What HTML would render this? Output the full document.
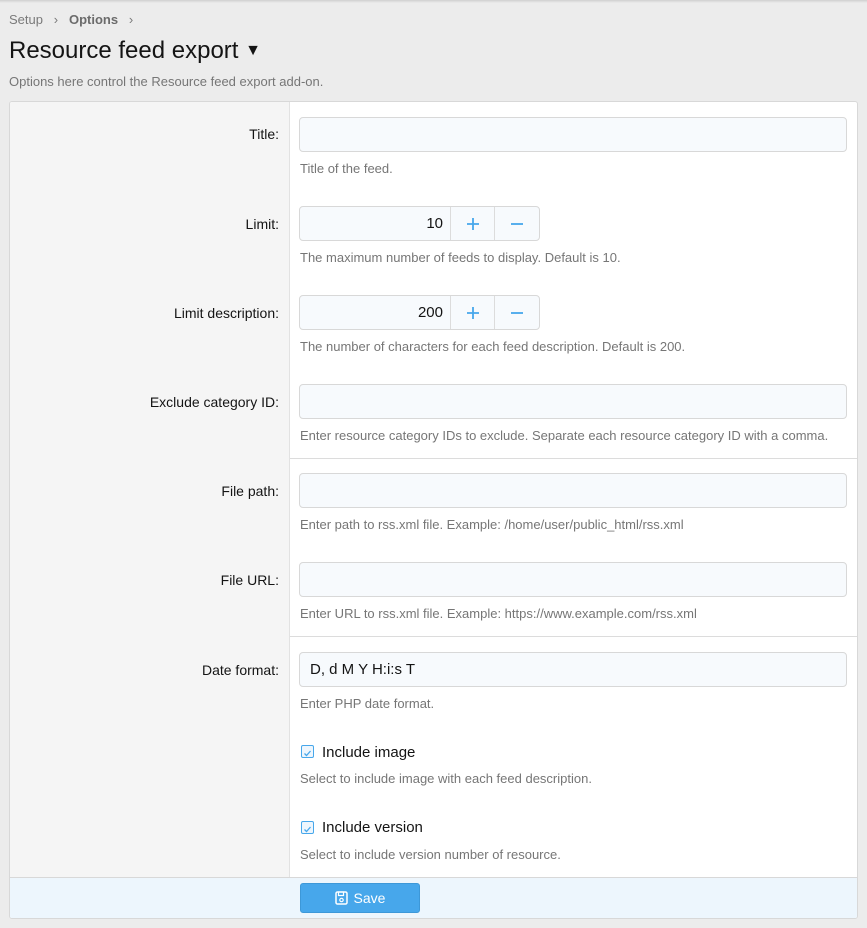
<!DOCTYPE html>
<html><head><meta charset="utf-8"><style>
*{box-sizing:border-box;margin:0;padding:0}
body{width:867px;height:928px;background:#ececec;font-family:"Liberation Sans",Arial,sans-serif;position:relative;overflow:hidden;color:#141414}
.topbar{position:absolute;left:0;top:0;width:867px;height:3px;background:linear-gradient(#cfcfcf,#ececec)}
.a{position:absolute}
.crumb{left:9px;top:12px;font-size:13px;color:#7a7a7a}
.crumb b{color:#6b6b6b}
h1{position:absolute;left:9px;top:37px;font-size:24px;font-weight:normal;color:#141414}
.desc{left:9px;top:74px;font-size:13px;color:#767676}
.panel{left:9px;top:101px;width:849px;height:818px;background:#fff;border:1px solid #d8d8d8;border-radius:3px;overflow:hidden}
.left{left:0;top:0;width:280px;height:776px;background:#f5f5f5;border-right:1px solid #e2e2e2}
.lbl{position:absolute;right:578px;font-size:14px;color:#141414;text-align:right;white-space:nowrap}
.in{position:absolute;left:289px;width:548px;height:35px;background:#f7fafd;border:1px solid #d8d8d8;border-radius:4px;font-size:15px;padding:8px 10px}
.help{position:absolute;left:290px;font-size:13px;color:#767676}
.sep{position:absolute;left:280px;width:569px;height:1px;background:#dcdcdc}
.num{position:absolute;left:289px;width:241px;height:35px;border:1px solid #d8d8d8;border-radius:4px;background:#f7fafd;display:flex}
.num .v{width:151px;text-align:right;padding:8px 7px;font-size:15px;border-right:1px solid #dcdcdc}
.num .b{width:44px;display:flex;align-items:center;justify-content:center;border-right:1px solid #dcdcdc}
.num .b:last-child{border-right:0}
.cb{position:absolute;left:291px;width:13px;height:13px;border:1px solid #47a7eb;border-radius:2px;background:#eef6fd}
.cbl{position:absolute;left:312px;font-size:15px}
.foot{position:absolute;left:0;top:775px;width:849px;height:43px;background:#edf6fd;border-top:1px solid #d8d8d8}
.btn{position:absolute;left:290px;top:5px;width:120px;height:30px;background:#47a7eb;border:1px solid #3d98d8;border-radius:3px;color:#fff;font-size:14px;text-align:center;line-height:28px}
</style></head><body>
<div class="topbar"></div>
<div class="a crumb">Setup &nbsp;&nbsp;›&nbsp;&nbsp; <b>Options</b> &nbsp;&nbsp;›</div>
<h1>Resource feed export <span style="font-size:16px;position:relative;top:-3px">▼</span></h1>
<div class="a desc">Options here control the Resource feed export add-on.</div>
<div class="a panel">
<div class="a left"></div>
<div class="lbl" style="top:24px">Title:</div>
<div class="in" style="top:15px"></div>
<div class="help" style="top:59px">Title of the feed.</div>
<div class="lbl" style="top:114px">Limit:</div>
<div class="num" style="top:104px"><div class="v">10</div><div class="b"><svg width="12" height="12"><path d="M6 0v12M0 6h12" stroke="#47a7eb" stroke-width="1.8"/></svg></div><div class="b"><svg width="12" height="12"><path d="M0 6h12" stroke="#47a7eb" stroke-width="1.8"/></svg></div></div>
<div class="help" style="top:148px">The maximum number of feeds to display. Default is 10.</div>
<div class="lbl" style="top:203px">Limit description:</div>
<div class="num" style="top:193px"><div class="v">200</div><div class="b"><svg width="12" height="12"><path d="M6 0v12M0 6h12" stroke="#47a7eb" stroke-width="1.8"/></svg></div><div class="b"><svg width="12" height="12"><path d="M0 6h12" stroke="#47a7eb" stroke-width="1.8"/></svg></div></div>
<div class="help" style="top:237px">The number of characters for each feed description. Default is 200.</div>
<div class="lbl" style="top:292px">Exclude category ID:</div>
<div class="in" style="top:282px"></div>
<div class="help" style="top:326px">Enter resource category IDs to exclude. Separate each resource category ID with a comma.</div>
<div class="sep" style="top:356px"></div>
<div class="lbl" style="top:381px">File path:</div>
<div class="in" style="top:371px"></div>
<div class="help" style="top:415px">Enter path to rss.xml file. Example: /home/user/public_html/rss.xml</div>
<div class="lbl" style="top:470px">File URL:</div>
<div class="in" style="top:460px"></div>
<div class="help" style="top:504px">Enter URL to rss.xml file. Example: https://www.example.com/rss.xml</div>
<div class="sep" style="top:534px"></div>
<div class="lbl" style="top:560px">Date format:</div>
<div class="in" style="top:550px">D, d M Y H:i:s T</div>
<div class="help" style="top:594px">Enter PHP date format.</div>
<div class="cb" style="top:643px"><svg width="11" height="11" viewBox="0 0 11 11"><path d="M2.5 5.5l2 2 4-4.5" stroke="#47a7eb" stroke-width="1.3" fill="none"/></svg></div>
<div class="cbl" style="top:642px">Include image</div>
<div class="help" style="top:669px">Select to include image with each feed description.</div>
<div class="cb" style="top:719px"><svg width="11" height="11" viewBox="0 0 11 11"><path d="M2.5 5.5l2 2 4-4.5" stroke="#47a7eb" stroke-width="1.3" fill="none"/></svg></div>
<div class="cbl" style="top:717px">Include version</div>
<div class="help" style="top:745px">Select to include version number of resource.</div>
<div class="foot"><div class="btn"><svg width="13" height="14" viewBox="0 0 13 14" style="vertical-align:-2px;margin-right:6px"><rect x="1" y="1" width="11" height="12" rx="1.5" fill="none" stroke="#fff" stroke-width="1.5"/><rect x="3.5" y="1" width="5" height="3.5" fill="none" stroke="#fff" stroke-width="1.2"/><circle cx="6.5" cy="9" r="1.7" fill="none" stroke="#fff" stroke-width="1.2"/></svg>Save</div></div>
</div>
</body></html>
